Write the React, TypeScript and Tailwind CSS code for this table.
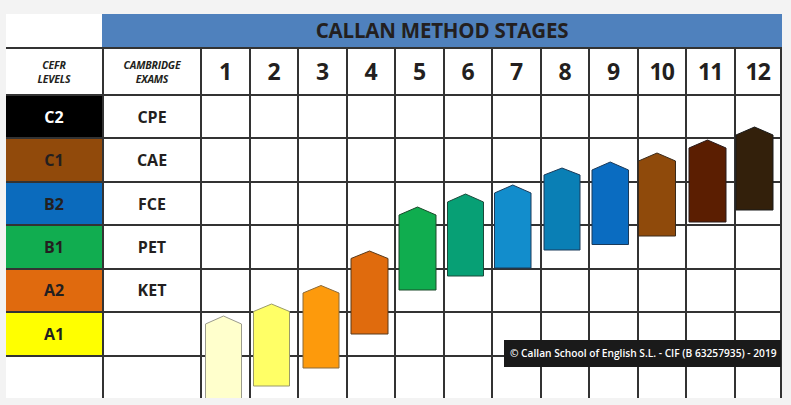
const levels = [
  { level: "C2", exam: "CPE", bg: "bg-black", text: "text-white" },
  { level: "C1", exam: "CAE", bg: "bg-[#914a0b]", text: "text-[#231f20]" },
  { level: "B2", exam: "FCE", bg: "bg-[#0b6bbd]", text: "text-[#231f20]" },
  { level: "B1", exam: "PET", bg: "bg-[#11ad50]", text: "text-[#231f20]" },
  { level: "A2", exam: "KET", bg: "bg-[#e06a0e]", text: "text-[#231f20]" },
  { level: "A1", exam: "", bg: "bg-[#ffff00]", text: "text-[#231f20]" },
  { level: "", exam: "", bg: "bg-white", text: "text-[#231f20]" },
];

const stages = [1, 2, 3, 4, 5, 6, 7, 8, 9, 10, 11, 12];

// stage markers, in page coordinates
const bars = [
  { x1: 205.5, x2: 241.5, top: 316, sh: 324, bottom: 399, fill: "#ffffcc", stroke: "#9b9b8c" },
  { x1: 253.5, x2: 289.5, top: 304, sh: 311.5, bottom: 386, fill: "#ffff66", stroke: "#9a9a6a" },
  { x1: 303, x2: 339, top: 285.5, sh: 293, bottom: 368, fill: "#fd9a0c", stroke: "#8a6a3a" },
  { x1: 351, x2: 388, top: 251, sh: 258.5, bottom: 334, fill: "#e06b0d", stroke: "#5a3a1a" },
  { x1: 399, x2: 436, top: 207, sh: 215, bottom: 290, fill: "#10ad4f", stroke: "#1a4a2a" },
  { x1: 447.5, x2: 483.5, top: 194, sh: 202, bottom: 276, fill: "#07a075", stroke: "#1a4a3a" },
  { x1: 494.5, x2: 531, top: 185, sh: 193, bottom: 268, fill: "#128dcc", stroke: "#1a3a5a" },
  { x1: 544, x2: 580, top: 168, sh: 175, bottom: 250, fill: "#0a7fb5", stroke: "#1a3a5a" },
  { x1: 592, x2: 628.5, top: 162, sh: 170, bottom: 244.5, fill: "#0a6cc1", stroke: "#1a3a5a" },
  { x1: 638.5, x2: 675.5, top: 153, sh: 161, bottom: 236, fill: "#8f4a0b", stroke: "#3a2a1a" },
  { x1: 689, x2: 726, top: 140, sh: 148, bottom: 222, fill: "#5b1e01", stroke: "#2a1a1a" },
  { x1: 736, x2: 773, top: 127, sh: 135, bottom: 210, fill: "#33200b", stroke: "#1a1a1a" },
];

export default function App() {
  return (
    <main className="min-h-screen w-[791px] h-[405px] bg-[#f3f3f3] pt-[14px] pl-[6px] font-['Open_Sans',sans-serif] text-[#231f20]">
      <div className="relative w-[776px] h-[384px] bg-white grid grid-cols-[96px_98px_repeat(12,minmax(0,1fr))] grid-rows-[33px_47px_repeat(7,minmax(0,1fr))]">
        {/* title row */}
        <div className="bg-white" />
        <div className="col-span-13 bg-[#4f81bd] flex items-center justify-center text-[20.5px] font-bold tracking-[-0.2px]">
          CALLAN METHOD STAGES
        </div>

        {/* header row */}
        <div className="border-t-2 border-[#333] flex flex-col items-center justify-center text-[10.5px] font-bold italic leading-[14px] tracking-[-0.2px]">
          <span>CEFR</span>
          <span>LEVELS</span>
        </div>
        <div className="border-t-2 border-l-2 border-[#333] flex flex-col items-center justify-center text-[10.5px] font-bold italic leading-[14px] tracking-[-0.2px]">
          <span>CAMBRIDGE</span>
          <span>EXAMS</span>
        </div>
        {stages.map((n) => (
          <div
            key={n}
            className={`border-t-2 border-l-2 border-[#333] flex items-center justify-center text-[23px] font-bold tracking-[-0.8px] ${n === 12 ? "border-r-2" : ""}`}
          >
            {n}
          </div>
        ))}

        {levels.map((row, r) => (
          <div key={r} className="contents">
            <div className={`border-t-2 border-[#333] flex items-center justify-center text-[16px] font-bold ${row.bg} ${row.text}`}>
              {row.level}
            </div>
            <div className="border-t-2 border-l-2 border-[#333] flex items-center justify-center text-[16px] font-bold">
              {row.exam}
            </div>
            {stages.map((n) => (
              <div key={n} className={`border-t-2 border-l-2 border-[#333] ${n === 12 ? "border-r-2" : ""}`} />
            ))}
          </div>
        ))}

        <svg className="absolute inset-0 pointer-events-none" width="776" height="384" viewBox="6 14 776 384">
          {bars.map((b, i) => (
            <polygon
              key={i}
              points={`${b.x1},${b.bottom} ${b.x1},${b.sh} ${(b.x1 + b.x2) / 2},${b.top} ${b.x2},${b.sh} ${b.x2},${b.bottom}`}
              fill={b.fill}
              stroke={b.stroke}
              strokeWidth="1"
            />
          ))}
        </svg>

        <div className="absolute left-[498px] top-[326px] w-[277px] h-[27px] bg-[#1a1a1a] text-white text-[10.2px] font-semibold flex items-center pl-[6px] whitespace-nowrap">
          © Callan School of English S.L. - CIF (B 63257935) - 2019
        </div>
      </div>
    </main>
  );
}
